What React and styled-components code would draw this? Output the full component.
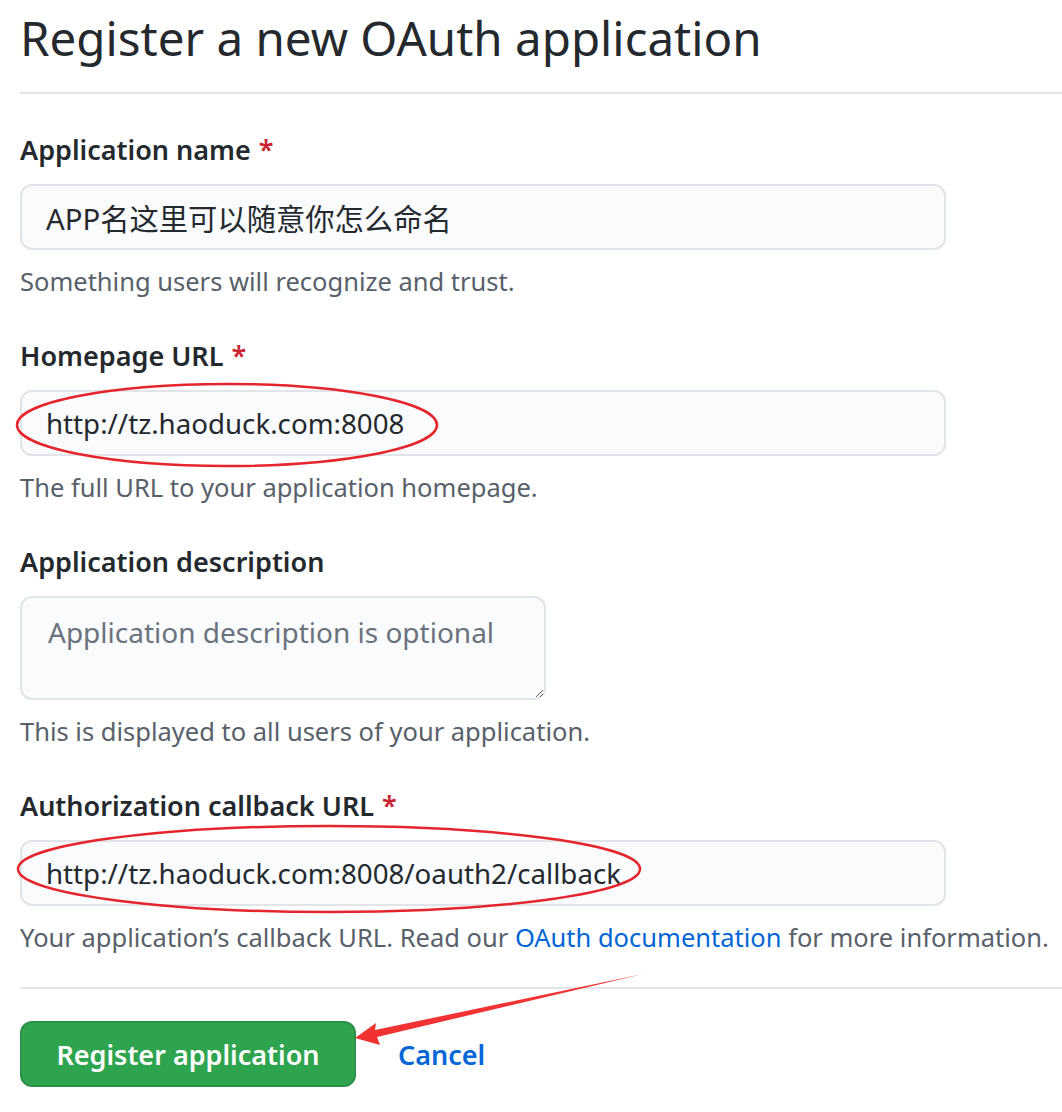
import React from "react";
import styled, { createGlobalStyle } from "styled-components";

const GlobalStyle = createGlobalStyle`
  html, body {
    margin: 0;
    padding: 0;
    background: #ffffff;
  }
  body {
    font-family: "Noto Sans", "Noto Sans CJK SC", sans-serif;
    color: #24292e;
  }
`;

const Page = styled.div`
  position: relative;
  width: 1062px;
  height: 1112px;
  overflow: hidden;
  padding-left: 20px;
  box-sizing: border-box;
`;

const Header = styled.div`
  border-bottom: 2px solid #e1e4e8;
  padding-top: 2px;
  padding-bottom: 18px;
  margin-bottom: 36px;
`;

const Title = styled.h1`
  margin: 0;
  font-size: 47.5px;
  font-weight: 400;
  line-height: 72px;
  color: #24292e;
`;

const FormGroup = styled.div`
  margin-bottom: ${(p) => p.$gap || 37}px;
`;

const Label = styled.label`
  display: block;
  font-size: 27px;
  font-weight: 600;
  line-height: 40px;
  margin-bottom: 14px;
  color: #24292e;
`;

const Required = styled.span`
  color: #cb2431;
  margin-left: 8px;
`;

const Input = styled.input`
  display: block;
  width: 926px;
  height: 66px;
  box-sizing: border-box;
  padding: 0 24px;
  font-family: "Noto Sans", "Noto Sans CJK SC", sans-serif;
  font-size: ${(p) => p.$size || 27.7}px;
  color: #24292e;
  background: #fafbfc;
  border: 2px solid #e1e4e8;
  border-radius: 12px;
  outline: none;
`;

const TextArea = styled.textarea`
  display: block;
  width: 526px;
  height: 104px;
  box-sizing: border-box;
  padding: 14px 26px;
  font-family: "Noto Sans", "Noto Sans CJK SC", sans-serif;
  font-size: 28px;
  line-height: 40px;
  color: #24292e;
  background: #fafbfc;
  border: 2px solid #e1e4e8;
  border-radius: 12px;
  outline: none;
  resize: vertical;

  &::placeholder {
    color: #6a737d;
  }
`;

const Note = styled.p`
  margin: 13px 0 0;
  font-size: 25.5px;
  line-height: 36px;
  color: #586069;
  white-space: nowrap;
`;

const Link = styled.a`
  color: #0366d6;
  text-decoration: none;
`;

const Divider = styled.hr`
  border: 0;
  border-top: 2px solid #e1e4e8;
  margin: 0 0 32px;
`;

const Actions = styled.div`
  display: flex;
  align-items: center;
  gap: 42px;
`;

const PrimaryButton = styled.button`
  height: 66px;
  width: 336px;
  box-sizing: border-box;
  border: 2px solid rgba(27, 31, 35, 0.15);
  border-radius: 12px;
  background: #2ea44f;
  color: #ffffff;
  font-family: "Noto Sans", sans-serif;
  font-size: 27px;
  font-weight: 600;
  cursor: pointer;
`;

const CancelLink = styled.a`
  color: #0366d6;
  font-size: 27px;
  font-weight: 600;
  text-decoration: none;
`;

const Annotations = styled.svg`
  position: absolute;
  left: 0;
  top: 0;
  pointer-events: none;
`;

const App = () => {
  return (
    <Page>
      <GlobalStyle />
      <Header>
        <Title>Register a new OAuth application</Title>
      </Header>

      <FormGroup>
        <Label>
          Application name<Required>*</Required>
        </Label>
        <Input
          type="text"
          $size={29.3}
          defaultValue="APP名这里可以随意你怎么命名"
        />
        <Note>Something users will recognize and trust.</Note>
      </FormGroup>

      <FormGroup>
        <Label>
          Homepage URL<Required>*</Required>
        </Label>
        <Input type="text" defaultValue="http://tz.haoduck.com:8008" />
        <Note>The full URL to your application homepage.</Note>
      </FormGroup>

      <FormGroup>
        <Label>Application description</Label>
        <TextArea placeholder="Application description is optional" />
        <Note>This is displayed to all users of your application.</Note>
      </FormGroup>

      <FormGroup $gap={32}>
        <Label>
          Authorization callback URL<Required>*</Required>
        </Label>
        <Input
          type="text"
          defaultValue="http://tz.haoduck.com:8008/oauth2/callback"
        />
        <Note>
          Your application’s callback URL. Read our{" "}
          <Link href="#">OAuth documentation</Link> for more information.
        </Note>
      </FormGroup>

      <Divider />

      <Actions>
        <PrimaryButton type="submit">Register application</PrimaryButton>
        <CancelLink href="#">Cancel</CancelLink>
      </Actions>

      <Annotations width="1062" height="1112" viewBox="0 0 1062 1112">
        <ellipse
          cx="227"
          cy="425"
          rx="210"
          ry="41"
          fill="none"
          stroke="#e4262c"
          strokeWidth="2.5"
        />
        <ellipse
          cx="329"
          cy="869"
          rx="311"
          ry="43"
          fill="none"
          stroke="#e4262c"
          strokeWidth="2.5"
        />
        <polygon
          points="355,1038 376,1023 375,1030 643,974 377,1037 380,1045"
          fill="#f03232"
        />
      </Annotations>
    </Page>
  );
};

export default App;
